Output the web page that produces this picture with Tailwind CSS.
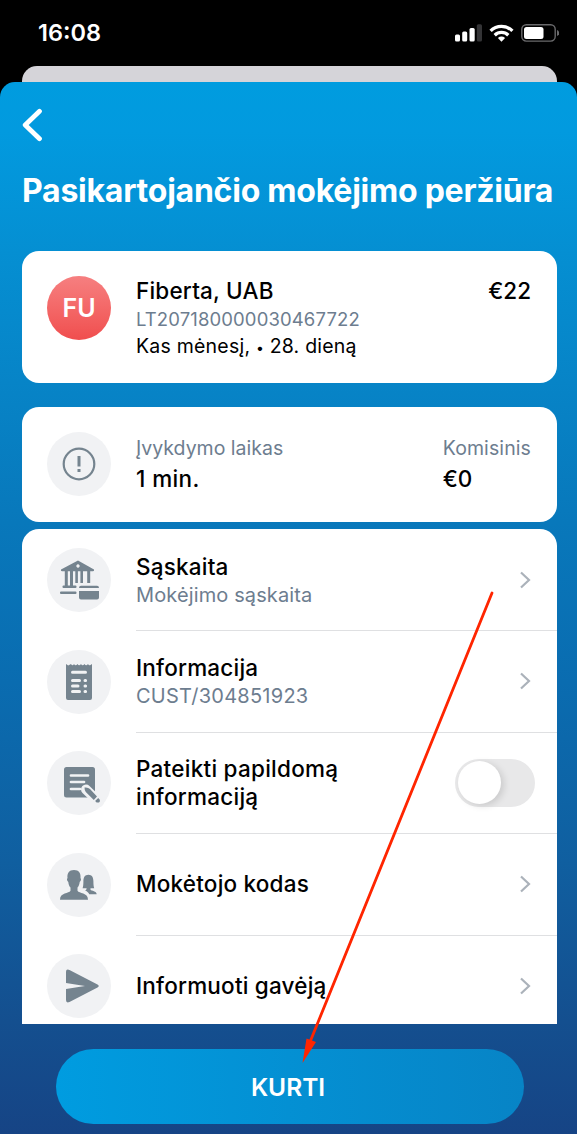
<!DOCTYPE html>
<html lang="lt">
<head>
<meta charset="utf-8">
<title>Pasikartojančio mokėjimo peržiūra</title>
<script src="https://cdn.jsdelivr.net/npm/@tailwindcss/browser@4"></script>
</head>
<body class="bg-black">
<div class="relative w-[577px] h-[1134px] overflow-hidden bg-black font-['Inter','Liberation_Sans',sans-serif] text-black whitespace-nowrap flex flex-col">
  <!-- Status bar -->
  <div class="h-[66px] shrink-0 flex items-center justify-between pl-[38px] pr-[18px] text-white">
    <span class="text-[23.5px] leading-7 font-semibold">16:08</span>
    <svg class="w-[106px] h-6" viewBox="453 21 106 24">
      <g fill="#fff"><rect x="455" y="34.5" width="5" height="7" rx="1.5"/><rect x="462.200" y="31.500" width="5" height="10" rx="1.500"/><rect x="469.500" y="28" width="5.200" height="13.500" rx="1.500"/></g>
      <rect x="476.800" y="24.300" width="5.200" height="17.200" rx="1.500" fill="#343436"/>
      <g fill="none" stroke="#fff" stroke-width="3.300"><path d="M490.600 30.900a15.400 15.400 0 0 1 21.800 0"/><path d="M494.700 35.200a9.700 9.700 0 0 1 13.600 0"/></g>
      <path fill="#fff" d="M501.500 41.800l-3.600-3.800q3.600-2.800 7.200 0z"/>
      <rect x="521.800" y="24.700" width="33.400" height="16.400" rx="4.500" fill="none" stroke="#69696b" stroke-width="1.400"/>
      <rect x="524" y="27" width="19.500" height="12" rx="2.500" fill="#fff"/>
      <path fill="#69696b" d="M557 30q2.300 1 2.300 3t-2.300 3z"/>
    </svg>
  </div>
  <!-- Sheet behind -->
  <div class="h-[32px] ml-[22px] mr-[20px] shrink-0 bg-[#d5d4d9] rounded-t-[15px]"></div>
  <!-- Main sheet -->
  <div class="relative -mt-[16.500px] grow flex flex-col rounded-t-[15px] bg-[linear-gradient(180deg,#009cdf_0px,#029adf_50px,#058fd2_170px,#0784c7_300px,#0878bb_440px,#0a6cb0_600px,#105fa0_780px,#144f8f_940px,#164485_1052px)]">
    <svg class="w-[22px] h-[34px] ml-[21px] mt-[26.500px] shrink-0" viewBox="0 0 22 34"><path d="M18.500 3.300 L4.200 17 L18.500 30.700" fill="none" stroke="#fff" stroke-width="4.800" stroke-linecap="round" stroke-linejoin="round"/></svg>
    <h1 class="ml-[22px] mt-[29px] h-10 text-[32px] leading-10 font-bold tracking-[-0.24px] text-white">Pasikartojančio mokėjimo peržiūra</h1>

    <section class="ml-[22px] mr-[20px] mt-[40px] h-[132px] shrink-0 bg-white rounded-[17px] flex pl-[25px] pr-[26px] pt-[25px]">
      <div class="size-16 shrink-0 rounded-full bg-linear-to-b from-[#f67f80] to-[#f04d4e] text-white text-[25px] font-semibold flex items-center justify-center pt-0.5">FU</div>
      <div class="ml-[25px] pt-px grow">
        <div class="text-[22.500px] leading-7 font-[450] tracking-[0.2px]">Fiberta, UAB</div>
        <div class="text-[18.500px] leading-7 text-[#6d7d8f] tracking-[0.12px]">LT207180000030467722</div>
        <div class="text-[19.500px] leading-[26px] tracking-[0.22px]">Kas mėnesį, <span class="inline-block w-2 text-center text-[14px]">•</span> 28. dieną</div>
      </div>
      <div class="pt-px text-[22.500px] leading-7 font-medium">€22</div>
    </section>

    <section class="ml-[22px] mr-[20px] mt-[24px] h-[115px] shrink-0 bg-white rounded-[17px] flex pl-[25px] pr-[26px] pt-[25px]">
      <div class="size-16 shrink-0 rounded-full bg-[#f1f2f4] flex items-center justify-center">
        <svg class="size-9" viewBox="0 0 36 36"><circle cx="18" cy="18" r="15.300" fill="none" stroke="#75848f" stroke-width="2.200"/><path d="M18 10v10.500M18 23v3" stroke="#75848f" stroke-width="3"/></svg>
      </div>
      <div class="ml-[25px] pt-px grow">
        <div class="text-[19.500px] leading-[30px] text-[#6d7d8f]">Įvykdymo laikas</div>
        <div class="text-[22.500px] leading-8 font-medium tracking-[0.4px]">1 min.</div>
      </div>
      <div class="pt-px">
        <div class="text-[19.500px] leading-[30px] tracking-[0.1px] text-[#6d7d8f]">Komisinis</div>
        <div class="text-[22.500px] leading-8 font-medium">€0</div>
      </div>
    </section>

    <section class="ml-[22px] mr-[20px] mt-[7px] pt-[0.500px] h-[495px] shrink-0 overflow-hidden bg-white rounded-t-[17px] pl-[25px]">
      <div class="h-[101.500px] flex items-center">
        <div class="size-16 shrink-0 rounded-full bg-[#f1f2f4]">
          <svg class="size-16" viewBox="0 0 64 64" fill="#75848f"><path fill-rule="evenodd" d="M31 12.500L47 21.500q.600 1.700-1 1.700H15q-1.600 0-1-1.700zM31 16.300a1.700 1.700 0 1 0 .01 0z"/><path d="M17.800 23h3v15h-3zM23 23h3v15h-3zM28.300 23h2.600v12h-2.600zM33.400 23h2.600v12h-2.600zM40.200 23h3v12h-3z"/><rect x="15.500" y="37.500" width="14" height="2.500" rx="1"/><rect x="13" y="43.500" width="16.500" height="2.500" rx="1"/><path d="M34 37.800h16q2 0 2 2.200H32q0-2.200 2-2.200zM32 43h20v6.500q0 2-2 2H34q-2 0-2-2z"/></svg>
        </div>
        <div class="ml-[25px] grow h-full flex justify-between items-center border-b border-[#dfe0e2] pr-[26px]">
          <div class="pt-[3px]"><div class="text-[22.500px] leading-[29px] font-[450] tracking-[0.2px]">Sąskaita</div><div class="text-[20px] leading-[29px] tracking-[0.12px] text-[#6d7d8f]">Mokėjimo sąskaita</div></div>
          <svg class="w-3 h-[18px]" viewBox="0 0 12 18"><path d="M2 1.500L10 9L2 16.500" fill="none" stroke="#abb2ba" stroke-width="2.200"/></svg>
        </div>
      </div>
      <div class="h-[101.500px] flex items-center">
        <div class="size-16 shrink-0 rounded-full bg-[#f1f2f4]">
          <svg class="size-16" viewBox="0 0 64 64"><path fill="#75848f" d="M19 14l2.200 1.600L24 14q1.500 2.500 3 0q1.500 2.500 3.500 0q1.500 2.500 3.500 0q1.500 2.500 3.500 0q1.500 2.500 3.500 0q1 2 2.500 1L45 14v34q0 2-2 2H21q-2 0-2-2z"/><g stroke="#f1f2f4" stroke-width="3" stroke-linecap="round"><path d="M25.500 22.300h13M25.500 30.500h7M25.500 36h5.500M25.500 41.500h7M38 30.500h.600M38 36h.600M38 41.500h.600"/></g></svg>
        </div>
        <div class="ml-[25px] grow h-full flex justify-between items-center border-b border-[#dfe0e2] pr-[26px]">
          <div class="pt-[2px]"><div class="text-[22.500px] leading-[29px] font-[450] tracking-[0.2px]">Informacija</div><div class="text-[20px] leading-[29px] tracking-[0.25px] text-[#6d7d8f]">CUST/304851923</div></div>
          <svg class="w-3 h-[18px]" viewBox="0 0 12 18"><path d="M2 1.500L10 9L2 16.500" fill="none" stroke="#abb2ba" stroke-width="2.200"/></svg>
        </div>
      </div>
      <div class="h-[101.500px] flex items-center">
        <div class="size-16 shrink-0 rounded-full bg-[#f1f2f4]">
          <svg class="size-16" viewBox="0 0 64 64"><rect x="17" y="16" width="31" height="30.500" rx="2.500" fill="#75848f"/><path d="M24 24.500h17M24 31h13M24 38h9" stroke="#f1f2f4" stroke-width="2.700" stroke-linecap="round"/><path d="M39 38.500L52 51" stroke="#f1f2f4" stroke-width="10" stroke-linecap="round"/><path fill="#75848f" d="M37.500 36.500q3.500-.5 5.500 1.500l7 7.500-3.200 3.500-8-8q-1.300-1.500-1.300-4.500zM51.200 47l1.600 1.700q.7 3.400-3.200 2.800l-1.500-1.500z"/></svg>
        </div>
        <div class="ml-[25px] grow h-full flex justify-between items-center border-b border-[#dfe0e2] pr-[22px]">
          <div class="text-[22.500px] leading-[27.500px] font-[450] tracking-[0.25px]">Pateikti papildomą<br>informaciją</div>
          <div class="w-20 h-12 rounded-full bg-[#e8e8e9] p-[3px] flex items-center"><div class="size-[43px] rounded-full bg-white shadow-[3px_2px_7px_rgba(0,0,0,0.13)]"></div></div>
        </div>
      </div>
      <div class="h-[101.500px] flex items-center">
        <div class="size-16 shrink-0 rounded-full bg-[#f1f2f4]">
          <svg class="size-16" viewBox="0 0 64 64" fill="#75848f"><path d="M27 17c5 0 7 3.500 6.500 8 1 1 .5 3-.8 4-.4 3-1.200 4.500-2.200 5.500v3.200c1.500 3 10.500 1.500 10.500 9H13c0-7.500 9-6 10.500-9v-3.200c-1-1-1.900-2.500-2.200-5.500-1.300-1-1.800-3-.8-4-.5-4.500 1.500-8 6.500-8z"/><path d="M41.400 21.700c3.600 0 5 2.800 5 6.500 0 3 .2 5 .8 7h-3.700v1.500c1 1.400 6.200.9 6.200 4.600h-7.400c-.8-2-2.500-3.200-4.300-3.900 1-.3 1.600-1 1.600-2.200h-4c.6-2 .8-4 .8-7 0-3.700 1.400-6.500 5-6.500z"/></svg>
        </div>
        <div class="ml-[25px] grow h-full flex justify-between items-center border-b border-[#dfe0e2] pr-[26px]">
          <div class="pb-[2px] text-[22.500px] leading-[29px] font-[450] tracking-[0.2px]">Mokėtojo kodas</div>
          <svg class="w-3 h-[18px]" viewBox="0 0 12 18"><path d="M2 1.500L10 9L2 16.500" fill="none" stroke="#abb2ba" stroke-width="2.200"/></svg>
        </div>
      </div>
      <div class="h-[101.500px] flex items-center">
        <div class="size-16 shrink-0 rounded-full bg-[#f1f2f4]">
          <svg class="size-16" viewBox="0 0 64 64"><path fill="#75848f" d="M19 18q0-3.500 3.500-2L50.500 30.500q2.500 1.500 0 3L22.500 48q-3.500 1.500-3.500-2V35L38 32 19 29z"/></svg>
        </div>
        <div class="ml-[25px] grow h-full flex justify-between items-center pr-[26px]">
          <div class="pb-[2px] text-[22.500px] leading-[29px] font-[450] tracking-[0.2px]">Informuoti gavėją</div>
          <svg class="w-3 h-[18px]" viewBox="0 0 12 18"><path d="M2 1.500L10 9L2 16.500" fill="none" stroke="#abb2ba" stroke-width="2.200"/></svg>
        </div>
      </div>
    </section>

    <button class="ml-[56px] mt-[25px] w-[468px] h-[75px] shrink-0 rounded-full bg-linear-to-r from-[#009ce0] to-[#0784c6] pt-0.5 pr-1 text-white text-[24.500px] font-semibold">KURTI</button>
  </div>
  <!-- Arrow pointing to the button -->
  <svg class="absolute left-0 top-0 w-[577px] h-[1134px] pointer-events-none" viewBox="0 0 577 1134"><path d="M492 593L310 1042" stroke="#ff2500" stroke-width="2.800" stroke-linecap="round"/><path d="M302.500 1063L306.500 1038.500L316 1042Z" fill="#ff2500"/></svg>
</div>
</body>
</html>
